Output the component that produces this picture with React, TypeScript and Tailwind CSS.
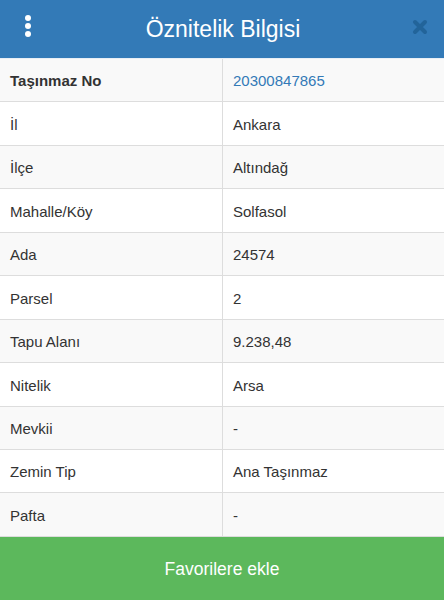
import React from "react";

const rows: [string, string][] = [
  ["Taşınmaz No", "20300847865"],
  ["İl", "Ankara"],
  ["İlçe", "Altındağ"],
  ["Mahalle/Köy", "Solfasol"],
  ["Ada", "24574"],
  ["Parsel", "2"],
  ["Tapu Alanı", "9.238,48"],
  ["Nitelik", "Arsa"],
  ["Mevkii", "-"],
  ["Zemin Tip", "Ana Taşınmaz"],
  ["Pafta", "-"],
];

export default function App() {
  return (
    <div
      className="w-[444px] h-[600px] flex flex-col bg-white overflow-hidden"
      style={{ fontFamily: '"Liberation Sans", Arial, sans-serif' }}
    >
      <div className="h-[59px] shrink-0 bg-[#337ab7] flex items-center relative border-b border-[#e8eef5]">
        <div className="absolute left-[25px] top-[15px] flex flex-col gap-[2px]">
          <span className="block w-[6px] h-[6px] rounded-full bg-white" />
          <span className="block w-[6px] h-[6px] rounded-full bg-white" />
          <span className="block w-[6px] h-[6px] rounded-full bg-white" />
        </div>
        <div className="flex-1 text-center text-white text-[23px] pl-[2px]">Öznitelik Bilgisi</div>
        <svg className="absolute right-[16px] top-[19px]" width="16" height="16" viewBox="0 0 16 16">
          <path d="M3 3 L13 13 M13 3 L3 13" stroke="#1f5f94" strokeWidth="4" strokeLinecap="round" opacity="0.8" />
        </svg>
      </div>
      <div className="flex flex-col shrink-0">
        {rows.map(([k, v], i) => (
          <div
            key={k}
            className={`h-[43.45px] flex border-b border-[#dddddd] text-[15px] ${i % 2 === 0 ? "bg-[#f9f9f9]" : "bg-white"}`}
          >
            <div className={`w-[223px] border-r border-[#dddddd] pl-[10px] pt-[3px] flex items-center text-[#333333] ${i === 0 ? "font-bold" : ""}`}>
              {k}
            </div>
            <div className={`flex-1 pl-[10px] pt-[3px] flex items-center ${i === 0 ? "text-[#337ab7]" : "text-[#333333]"}`}>
              {v}
            </div>
          </div>
        ))}
      </div>
      <div className="flex-1 bg-[#5cb85c] flex items-center justify-center text-white text-[17.5px] pt-[2px]">
        Favorilere ekle
      </div>
    </div>
  );
}
